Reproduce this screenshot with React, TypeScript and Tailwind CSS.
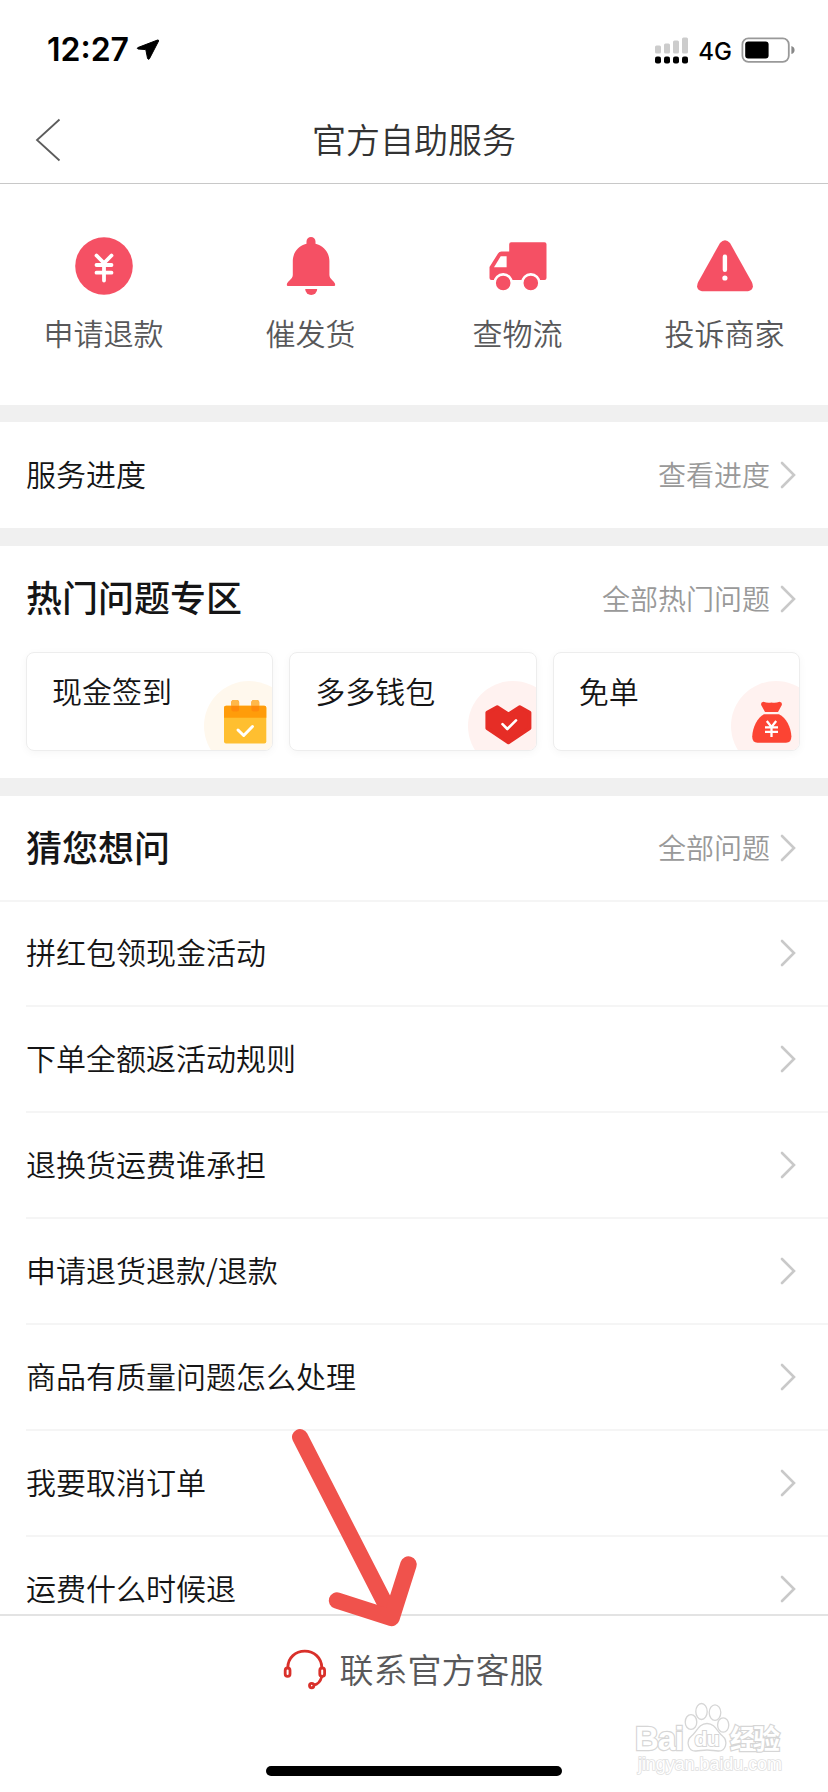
import type { ReactNode } from "react";

const questions = [
  "拼红包领现金活动",
  "下单全额返活动规则",
  "退换货运费谁承担",
  "申请退货退款/退款",
  "商品有质量问题怎么处理",
  "我要取消订单",
  "运费什么时候退",
];

function Chevron() {
  return (
    <svg className="h-[28px] w-[16px] shrink-0" viewBox="0 0 16 28" fill="none">
      <path d="M2 2 L14 14 L2 26" stroke="#c9c9c9" strokeWidth="2.6" strokeLinecap="round" />
    </svg>
  );
}

function MoreLink({ label }: { label: string }) {
  return (
    <div className="flex items-center gap-[10px] text-[28px] text-[#999]">
      <span className="pb-[3px]">{label}</span>
      <Chevron />
    </div>
  );
}

function StatusBar() {
  return (
    <div className="flex h-[98px] items-center justify-between pt-[2px] pr-[32px] pl-[47px] font-['Inter',sans-serif] text-black">
      <div className="flex items-center gap-[7px]">
        <span className="text-[32px] leading-none font-semibold">12:27</span>
        <svg className="h-[22px] w-[24px]" viewBox="0 0 24 22">
          <path d="M21.6 1 L1.8 8.6 Q0.6 9.4 2 10 L9.8 10.6 L11.6 19.6 Q12.4 21 13.4 19.8 L22.6 2 Q22.8 0.8 21.6 1 Z" stroke="#000" />
        </svg>
      </div>
      <div className="flex items-center">
        <svg className="h-[28px] w-[35px]" viewBox="0 0 35 28">
          <g fill="#cccccc">
            <rect x="1" y="9.5" width="6" height="8" rx="1.5" />
            <rect x="10" y="7.5" width="6" height="10" rx="1.5" />
            <rect x="19" y="4.5" width="6" height="13" rx="1.5" />
            <rect x="28" y="1.5" width="6" height="16" rx="1.5" />
          </g>
          <rect x="1" y="20.5" width="6" height="7" rx="2" />
          <rect x="10" y="20.5" width="6" height="7" rx="2" />
          <rect x="19" y="20.5" width="6" height="7" rx="2" />
          <rect x="28" y="20.5" width="6" height="7" rx="2" />
        </svg>
        <span className="ml-[9px] pt-[3px] text-[24px] leading-none font-medium">4G</span>
        <svg className="ml-[9px] h-[28px] w-[55px]" viewBox="0 0 55 28">
          <rect x="1.4" y="2.4" width="46.4" height="23.4" rx="6" fill="none" stroke="#999" strokeWidth="1.8" />
          <rect x="4.2" y="5.4" width="23.4" height="17.2" rx="3" />
          <path d="M50.4 10 Q53.6 11 53.6 14 Q53.6 17 50.4 18 Z" fill="#888" />
        </svg>
      </div>
    </div>
  );
}

function Shortcut({ label, children }: { label: string; children: ReactNode }) {
  return (
    <div className="flex flex-1 flex-col items-center">
      <svg className="h-[60px] w-[60px]" viewBox="0 0 60 60" fill="#f55064">
        {children}
      </svg>
      <span className="mt-[14px] text-[30px] leading-[44px] text-[#58585a]">{label}</span>
    </div>
  );
}

function TopicCard({ label, tint, children }: { label: string; tint: string; children: ReactNode }) {
  return (
    <div className="relative h-[99px] flex-1 overflow-hidden rounded-[8px] border border-[#ededed] pt-[15px] pl-[25px] shadow-[0_2px_8px_rgba(0,0,0,0.04)]">
      <span className="relative text-[30px] leading-[44px]">{label}</span>
      <svg className="absolute -right-px -bottom-px h-[70px] w-[70px]" viewBox="0 0 70 70">
        <circle cx="46" cy="45" r="45" fill={tint} />
        {children}
      </svg>
    </div>
  );
}

function Watermark() {
  return (
    <svg
      className="absolute right-[42px] bottom-[12px] h-[80px] w-[156px] font-['Liberation_Sans','Noto_Sans_CJK_SC',sans-serif]"
      viewBox="0 0 156 80"
      fill="#fff"
      stroke="#d6d6d6"
      strokeWidth="1.3"
    >
      <g fontWeight="700" strokeWidth="2.4" style={{ paintOrder: "stroke" }}>
        <text x="5" y="50" fontSize="33" textLength="49">Bai</text>
        <text x="100" y="49" fontSize="27" textLength="50">经验</text>
      </g>
      <ellipse cx="61" cy="22" rx="5.8" ry="7.4" />
      <ellipse cx="71.5" cy="11.5" rx="5.7" ry="8" />
      <ellipse cx="85" cy="12.6" rx="5.8" ry="7.8" />
      <ellipse cx="93.2" cy="25" rx="5.6" ry="7.2" />
      <path d="M77 23.5 C69 23.5 66.5 32 61.5 36 C55.5 41 58 51.5 66 51 C70 50.8 73 50 77 50 C81 50 84 50.8 88 51 C96 51.5 98.5 41 92.5 36 C87.5 32 85 23.5 77 23.5 Z" />
      <text x="64.5" y="46" fontSize="21" fontWeight="700" textLength="25" strokeWidth="2" style={{ paintOrder: "stroke" }}>du</text>
      <text x="8" y="70" fontSize="18" textLength="144" strokeWidth="1.6" stroke="#e0e0e0" style={{ paintOrder: "stroke" }}>jingyan.baidu.com</text>
    </svg>
  );
}

export default function App() {
  return (
    <div className="relative flex h-[1792px] w-[828px] flex-col overflow-hidden bg-white font-['Noto_Sans_CJK_SC',sans-serif] leading-none font-[350] text-[#151516]">
      <StatusBar />

      <header className="flex h-[86px] items-center border-b border-[#c8c8c8] pl-[35px]">
        <svg className="mb-[2px] h-[44px] w-[26px]" viewBox="0 0 26 44" fill="none">
          <path d="M24.5 1.5 L2 22 L24.5 42.5" stroke="#5c5c5c" strokeWidth="1.8" />
        </svg>
        <h1 className="flex-1 pr-[61px] pb-[4px] text-center text-[34px] text-[#333]">官方自助服务</h1>
      </header>

      <section className="flex h-[221px] pt-[52px]">
        <Shortcut label="申请退款">
          <circle cx="30" cy="30" r="28.8" />
          <path
            d="M22.5 19.5 L30 27 L37.500 19.5 M30 27.5 V44.500 M22.500 29 H37.500 M22.500 36.700 H37.500"
            fill="none"
            stroke="#fff"
            strokeWidth="3.8"
            strokeLinecap="round"
          />
        </Shortcut>
        <Shortcut label="催发货">
          <path d="M25.5 7.8 V5.5 A4.5 4.5 0 0 1 34.5 5.5 V7.8 C43 10 48.4 17 48.4 25 V39 C48.4 43.5 54.2 45 54.2 49 Q54.2 50 53 50 H7 Q5.8 50 5.8 49 C5.8 45 11.8 43.5 11.8 39 V25 C11.8 17 17 10 25.5 7.8 Z" />
          <path d="M24.2 53 H36.2 A6 6 0 0 1 24.2 53 Z" />
        </Shortcut>
        <Shortcut label="查物流">
          <path d="M23.2 6.3 H56.5 Q58.5 6.3 58.5 8.3 V42 Q58.5 44 56.5 44 H3.5 Q1.5 44 1.5 42 V31 L10 17.5 Q11.2 15.5 13.5 15.5 H21.2 V8.3 Q21.2 6.3 23.2 6.3 Z" />
          <path d="M12.7 20.2 H18.6 V31.3 H6 Z" fill="#fff" />
          <g stroke="#fff" strokeWidth="2.6">
            <circle cx="15.2" cy="47" r="8.6" />
            <circle cx="42.8" cy="47" r="8.6" />
          </g>
        </Shortcut>
        <Shortcut label="投诉商家">
          <path d="M25 7 Q30 1.4 35 7 L56.8 46 Q60.2 53.5 53 55.2 H7 Q-0.2 53.5 3.2 46 Z" />
          <path d="M29.9 20.8 V33.8" stroke="#fff" strokeWidth="4.4" strokeLinecap="round" />
          <circle cx="29.9" cy="42" r="2.6" fill="#fff" />
        </Shortcut>
      </section>

      <section className="flex h-[141px] items-center justify-between border-t-[17px] border-b-[18px] border-[#f0f0f0] pr-[32px] pl-[26px]">
        <span className="pb-[4px] text-[30px]">服务进度</span>
        <MoreLink label="查看进度" />
      </section>

      <section className="h-[250px] border-b-[18px] border-[#f0f0f0] pr-[28px] pl-[26px]">
        <div className="flex h-[106px] items-center justify-between pr-[4px]">
          <h2 className="pb-[6px] text-[36px] font-medium">热门问题专区</h2>
          <MoreLink label="全部热门问题" />
        </div>
        <div className="flex gap-[16px]">
          <TopicCard label="现金签到" tint="#fff8ed">
            <rect x="21" y="24.7" width="42.3" height="37.8" rx="2" fill="#ffbf30" />
            <path d="M21 36.8 V26.7 Q21 24.7 23 24.7 H61.3 Q63.3 24.7 63.3 26.7 V36.8 Z" fill="#ff9c0a" />
            <rect x="28.3" y="19" width="7.8" height="11.5" rx="2.5" fill="#ff8a0a" />
            <rect x="48.4" y="19" width="7.8" height="11.5" rx="2.5" fill="#ff8a0a" />
            <path d="M28.3 24.7 V21.5 Q28.3 19 30.8 19 H33.6 Q36.1 19 36.1 21.5 V24.7 Z M48.4 24.7 V21.5 Q48.4 19 50.9 19 H53.7 Q56.2 19 56.2 21.5 V24.7 Z" fill="#ffb84a" />
            <path d="M35 49 L40.7 54.5 L49.5 45.5" fill="none" stroke="#fff" strokeWidth="3" strokeLinecap="round" strokeLinejoin="round" />
          </TopicCard>
          <TopicCard label="多多钱包" tint="#fff2f0">
            <path
              d="M30.2 26 L41.4 33.3 L52.8 26 L62.6 31.5 V47.3 L41.4 61.4 L20.2 47.3 V31.5 Z"
              fill="#e62d26"
              stroke="#e62d26"
              strokeWidth="3.6"
              strokeLinejoin="round"
            />
            <path d="M35.5 43.2 L40.3 48 L49 39.4" fill="none" stroke="#fff" strokeWidth="2.6" strokeLinecap="round" strokeLinejoin="round" />
          </TopicCard>
          <TopicCard label="免单" tint="#fff2f0">
            <path d="M33.5 20.8 Q37.5 22.5 41.5 21.5 Q45.5 22.5 49.5 20.8 Q53.5 21.5 51 25.5 L48 31 H35 L32 25.5 Q29.5 21.5 33.5 20.8 Z" fill="#fc4433" />
            <path d="M34 33.2 H49 C56 36.5 61 46 61.4 55.5 Q61.4 61.7 56 61.7 H27.5 Q22.2 61.7 22.2 55.5 C22.6 46 27.5 36.5 34 33.2 Z" fill="#fc4433" />
            <path d="M36.8 40 L41.5 46 L46.2 40 M41.5 46 V56 M35 46.3 H48 M35 50.8 H48" fill="none" stroke="#fff" strokeWidth="2.3" />
          </TopicCard>
        </div>
      </section>

      <section className="h-[818px] overflow-hidden">
        <div className="flex h-[106px] items-center justify-between border-b-2 border-[#f5f5f5] pr-[32px] pl-[26px]">
          <h2 className="pb-[5px] text-[36px] font-medium">猜您想问</h2>
          <MoreLink label="全部问题" />
        </div>
        <ul className="-mt-px pl-[26px]">
          {questions.map((question) => (
            <li
              key={question}
              className="flex h-[106px] items-center justify-between border-b-2 border-[#f5f5f5] pr-[32px] text-[30px]"
            >
              <span className="pb-[4px]">{question}</span>
              <Chevron />
            </li>
          ))}
        </ul>
      </section>

      <footer className="flex flex-1 flex-col items-center border-t-2 border-[#e3e3e3]">
        <div className="mt-[30px] flex h-[48px] items-center gap-[13px] pr-[2px] text-[34px] text-[#58585a]">
          <svg className="h-[42px] w-[44px]" viewBox="0 0 44 42" fill="none" stroke="#d9302a" strokeWidth="2.8">
            <path d="M4.8 18.500 C5 8.500 12.500 2.200 21.800 2.200 C31 2.200 38.500 8.500 38.800 18.500" />
            <rect x="2.200" y="19" width="4.800" height="8.400" rx="2.400" />
            <rect x="36.800" y="19" width="4.800" height="8.400" rx="2.400" />
            <path d="M38.800 27.500 C37.500 32.500 34.500 35.500 30.500 36.200" />
            <circle cx="28.700" cy="36.600" r="2.200" />
          </svg>
          <span className="pb-[2px]">联系官方客服</span>
        </div>
        <div className="mt-[72px] h-[10px] w-[296px] rounded-full bg-black" />
      </footer>

      <svg className="absolute top-[1420px] left-[280px] h-[220px] w-[150px]" viewBox="280 1420 150 220" fill="none" stroke="#f0524c" strokeLinecap="round" strokeLinejoin="round">
        <path d="M300 1437 L390 1613" strokeWidth="16" />
        <path d="M337 1600.5 L391.5 1618 L408.5 1564.5" strokeWidth="16.5" />
      </svg>

      <Watermark />
    </div>
  );
}
